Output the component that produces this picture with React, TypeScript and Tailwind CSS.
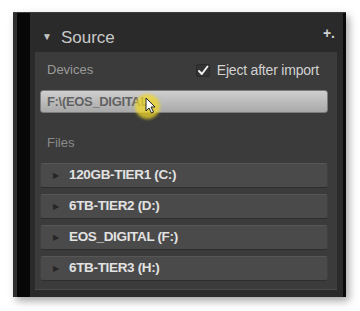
import React from 'react';

const drives = [
  '120GB-TIER1 (C:)',
  '6TB-TIER2 (D:)',
  'EOS_DIGITAL (F:)',
  '6TB-TIER3 (H:)',
];

function Cursor() {
  return (
    <div className="absolute left-[122px] top-[81px] w-[25px] h-[25px]">
      <div className="absolute inset-0 rounded-full bg-[#f0d828]/75 blur-[1.5px]" />
      <svg
        className="absolute left-[10px] top-[3px]"
        width="11"
        height="17"
        viewBox="0 0 11 17"
      >
        <path
          d="M1 1 L1 14 L4 11 L6.5 16 L8.5 15 L6 10 L10 10 Z"
          fill="#ffffff"
          stroke="#222222"
          strokeWidth="1"
          strokeLinejoin="round"
        />
      </svg>
    </div>
  );
}

export default function App() {
  return (
    <div
      className="w-[360px] h-[311px] bg-white pt-[12px] pl-[13px] overflow-hidden"
      style={{ fontFamily: '"Liberation Sans", Arial, sans-serif' }}
    >
      <div className="relative flex w-[333px] h-[285px] bg-[#2e2e2e] pl-[4px] border-t border-[#3c3c3c] shadow-[3px_4px_8px_rgba(0,0,0,0.35)]">
        <div className="w-[13px] bg-[#070707]" />
        <div className="flex-1 flex flex-col bg-[#2a2a2a]">
          {/* header */}
          <div className="h-[39px] flex items-center pl-[12px] pr-[8px] pt-[9px]">
            <span className="text-[10px] text-[#c4c4c4] leading-none -mt-[1px]">▼</span>
            <span className="ml-[9px] text-[17px] text-[#c9c9c9] leading-none">Source</span>
            <span className="ml-auto mb-[9px] text-[14px] font-bold text-[#d0d0d0] leading-none">+.</span>
          </div>

          {/* content */}
          <div className="ml-[5px] mr-[6px] bg-[#3b3b3b] pt-[9px] pb-[8px] border-b border-[#4a4a4a]">
            <div className="h-[18px] flex items-center pl-[12px] pr-[18px]">
              <span className="text-[13px] text-[#9a9a9a]">Devices</span>
              <div className="ml-auto flex items-center">
                <div className="w-[14px] h-[13px] bg-[#333333] border border-[#2a2a2a] rounded-[2px] flex items-center justify-center">
                  <svg width="12" height="11" viewBox="0 0 12 11">
                    <path
                      d="M2 6 L4.8 9 L10.5 1.5"
                      fill="none"
                      stroke="#f0f0f0"
                      strokeWidth="2"
                      strokeLinecap="round"
                      strokeLinejoin="round"
                    />
                  </svg>
                </div>
                <span className="ml-[7px] text-[14px] text-[#d2d2d2] tracking-[-0.2px]">Eject after import</span>
              </div>
            </div>

            <div className="mt-[11px] ml-[5px] mr-[9px] h-[23px] rounded-[3px] border border-[#7c7c7c] bg-gradient-to-b from-[#cfcfcf] to-[#a9a9a9] flex items-center pl-[6px]">
              <span className="text-[13px] font-semibold text-[#626262] tracking-tight">F:\(EOS_DIGITAL</span>
            </div>

            <div className="mt-[21px] h-[18px] flex items-center pl-[12px]">
              <span className="text-[13px] text-[#8a8a8a]">Files</span>
            </div>

            <div className="mt-[11px] ml-[5px] mr-[9px] flex flex-col gap-[6px]">
              {drives.map((d) => (
                <div
                  key={d}
                  className="h-[25px] flex items-center rounded-[3px] bg-[#4a4a4a] border-t border-[#565656] border-b border-b-[#2e2e2e] border-x border-x-[#404040] pl-[12px]"
                >
                  <span className="text-[8px] text-[#262626] leading-none">▶</span>
                  <span className="ml-[10px] text-[13.5px] font-semibold text-[#e2e2e2] tracking-tight">{d}</span>
                </div>
              ))}
            </div>
          </div>
        </div>
        <div className="w-[3px] bg-[#0a0a0a]" />
        <Cursor />
      </div>
    </div>
  );
}
